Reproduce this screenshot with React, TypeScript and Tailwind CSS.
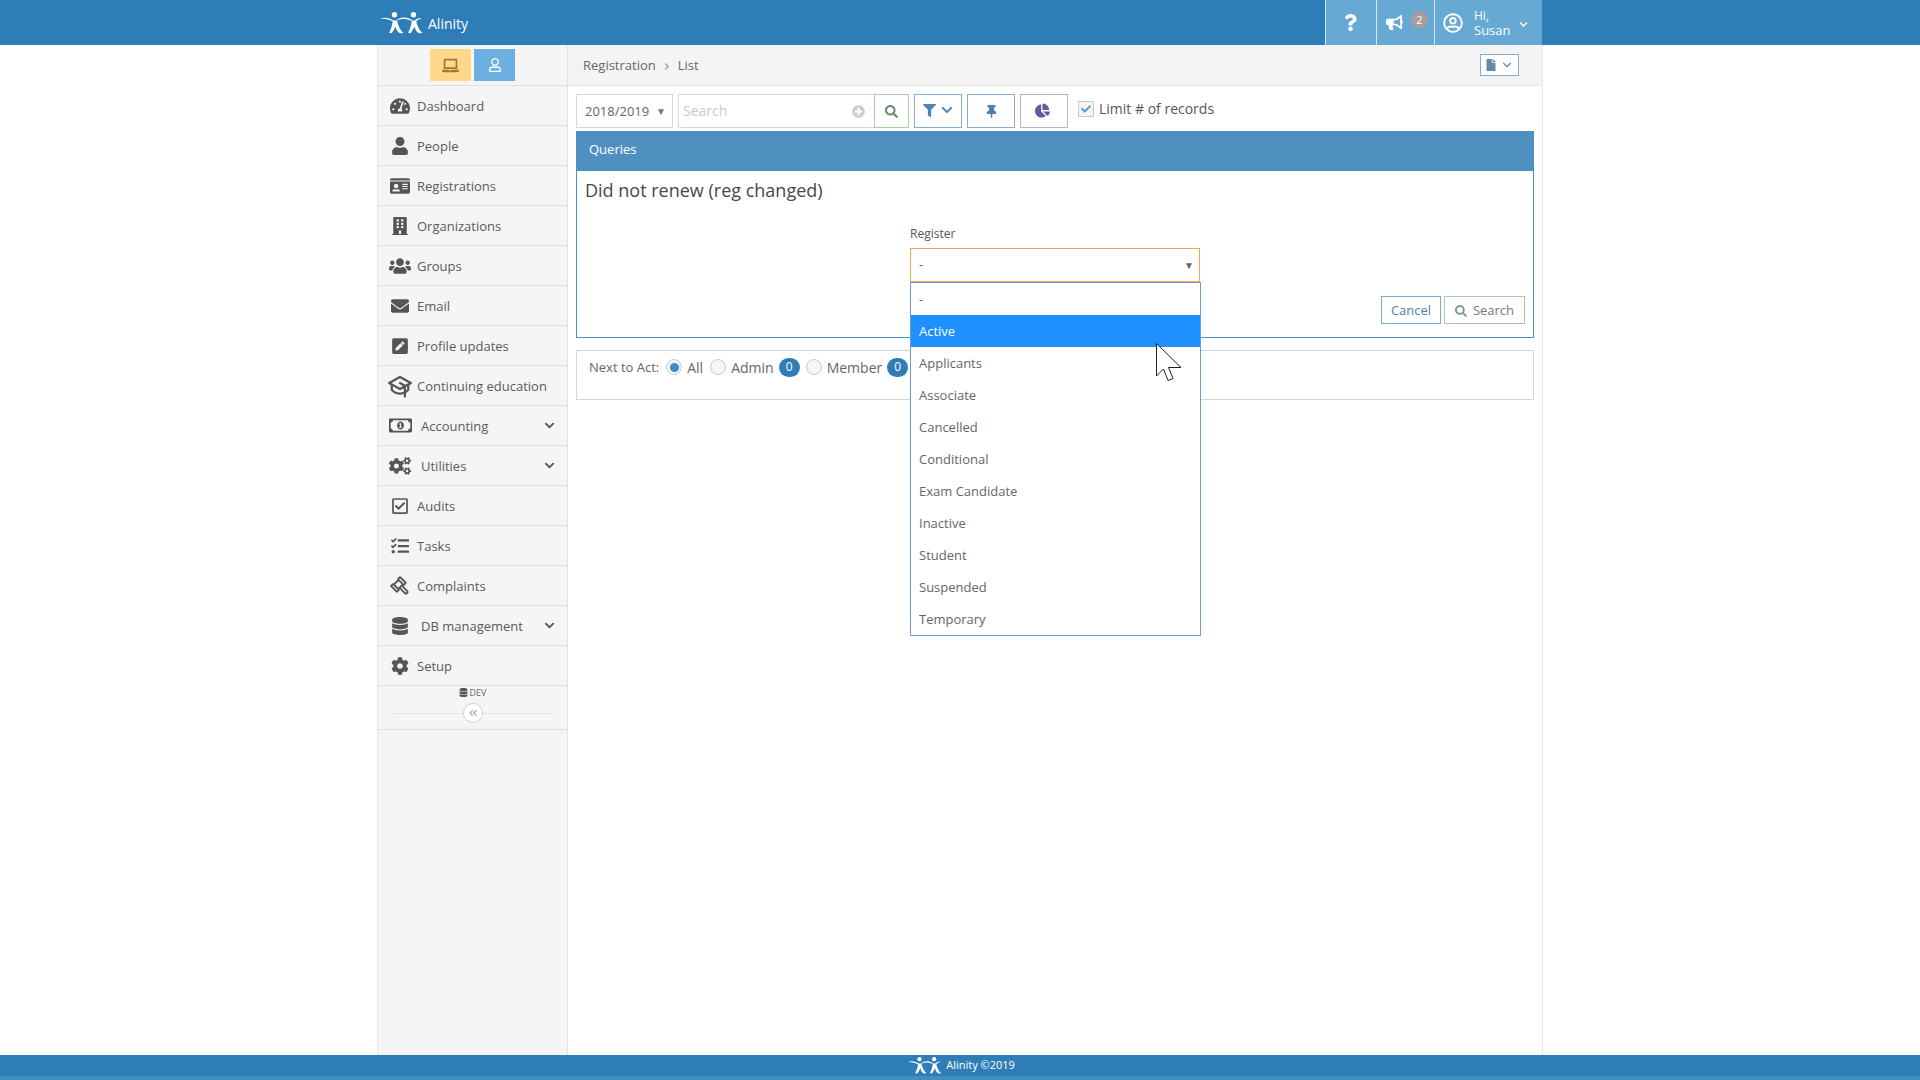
import type { ReactNode } from "react";
import {
  FaBuilding,
  FaBullhorn,
  FaChartPie,
  FaChevronDown,
  FaCog,
  FaCogs,
  FaDatabase,
  FaEnvelope,
  FaFile,
  FaFilter,
  FaIdCard,
  FaLaptop,
  FaPenSquare,
  FaPlusCircle,
  FaQuestion,
  FaRegCheckSquare,
  FaRegMoneyBillAlt,
  FaRegUser,
  FaRegUserCircle,
  FaSearch,
  FaTachometerAlt,
  FaTasks,
  FaThumbtack,
  FaUser,
  FaUsers,
  FaAngleDoubleLeft,
  FaAngleRight,
  FaCheck,
} from "react-icons/fa";
import { LuChevronDown } from "react-icons/lu";
import { PiGavelBold, PiGraduationCapBold } from "react-icons/pi";

type MenuItem = { label: string; icon: ReactNode; more?: boolean };

const menu: MenuItem[] = [
  { label: "Dashboard", icon: <FaTachometerAlt className="text-[20px]" /> },
  { label: "People", icon: <FaUser className="text-[18px]" /> },
  { label: "Registrations", icon: <FaIdCard className="text-[20px]" /> },
  { label: "Organizations", icon: <FaBuilding className="text-[18px]" /> },
  { label: "Groups", icon: <FaUsers className="text-[22px]" /> },
  { label: "Email", icon: <FaEnvelope className="text-[18px]" /> },
  { label: "Profile updates", icon: <FaPenSquare className="text-[18px]" /> },
  { label: "Continuing education", icon: <PiGraduationCapBold className="text-[24px]" /> },
  { label: "Accounting", icon: <FaRegMoneyBillAlt className="text-[23px]" />, more: true },
  { label: "Utilities", icon: <FaCogs className="text-[22px]" />, more: true },
  { label: "Audits", icon: <FaRegCheckSquare className="text-[18px]" /> },
  { label: "Tasks", icon: <FaTasks className="text-[18px]" /> },
  { label: "Complaints", icon: <PiGavelBold className="text-[20px] -scale-x-100" /> },
  { label: "DB management", icon: <FaDatabase className="text-[18px]" />, more: true },
  { label: "Setup", icon: <FaCog className="text-[18px]" /> },
];

const registers = [
  "-",
  "Active",
  "Applicants",
  "Associate",
  "Cancelled",
  "Conditional",
  "Exam Candidate",
  "Inactive",
  "Student",
  "Suspended",
  "Temporary",
];

// two robed figures holding hands
function Logo({ className }: { className: string }) {
  const figure =
    "M12.8 8.4H17C18 13 20 18 23.4 21C20 22 17 20.5 15.6 14.4C14.6 16.4 13 19.4 11 21.6L9.2 20.6C11 17 12.4 13 12.8 8.4Z";
  return (
    <svg viewBox="0 0 42 22" className={className} fill="currentColor">
      <circle cx="14.5" cy="2.8" r="2.7" />
      <circle cx="33.5" cy="2.8" r="2.7" />
      <path d={figure} />
      <path d={figure} transform="translate(19 0)" />
      <path d="M0 6.4C5 4.8 10 5.8 14 9L13 9.6C9.5 7.4 5 6.5 0 6.4Z" />
      <path d="M16 8.6C20 4.8 26.5 4.4 32 8L31.4 9C26.5 6.4 21 6.4 16 8.6Z" />
      <path d="M35 8.6C36.6 6.4 39 5.8 42 6.4C39.5 6.8 37.6 7.6 36 9.6Z" />
    </svg>
  );
}

function Radio({ checked }: { checked?: boolean }) {
  return (
    <span className="flex h-[16px] w-[16px] items-center justify-center rounded-full border border-[#c4c8cc] bg-[#f6f6f6]">
      {checked && <span className="h-[9px] w-[9px] rounded-full bg-[#3f8bd0]" />}
    </span>
  );
}

function Count() {
  return (
    <span className="flex h-[19px] w-[21px] items-center justify-center rounded-full bg-[#2f7db6] text-[12px] text-white">
      0
    </span>
  );
}

function Sidebar() {
  return (
    <aside className="flex w-[190px] shrink-0 flex-col border-r border-[#e3e3e3] bg-[#f5f5f5] bg-[radial-gradient(#e6e6e6_0.6px,transparent_0.6px)] bg-[length:4px_4px] text-[13px] text-[#5a5a5a]">
      <div className="flex h-[41px] justify-center gap-[3px] border-b border-[#e0e0e0] pt-[4px]">
        <button className="flex h-[32px] w-[41px] items-center justify-center bg-[#ffd88a] text-[#a9713a]">
          <FaLaptop className="text-[17px]" />
        </button>
        <button className="flex h-[32px] w-[41px] items-center justify-center bg-[#6cb0e2] text-white">
          <FaRegUser className="text-[14px]" />
        </button>
      </div>
      {menu.map((item) => (
        <div
          key={item.label}
          className={`flex h-[40px] items-center border-b border-[#e0e0e0] pl-[10px] pr-[12px] ${item.more ? "gap-[9px]" : "gap-[5px]"}`}
        >
          <span className="flex w-[24px] justify-center text-[#555]">{item.icon}</span>
          <span className="flex-1 pt-[2px]">{item.label}</span>
          {item.more && <FaChevronDown className="text-[11px] text-[#555]" />}
        </div>
      ))}
      <div className="h-[44px] border-b border-[#e0e0e0]">
        <div className="flex h-[13px] items-center justify-center gap-[2px] text-[9px] text-[#666]">
          <FaDatabase className="text-[9px] text-[#555]" />
          DEV
        </div>
        <div className="mx-[15px] mt-[4px] flex items-center">
          <span className="h-px flex-1 bg-[#e2e2e2]" />
          <span className="flex h-[20px] w-[20px] items-center justify-center rounded-full border border-[#cfcfcf] bg-white text-[#b5b5b5]">
            <FaAngleDoubleLeft className="text-[10px]" />
          </span>
          <span className="h-px flex-1 bg-[#e2e2e2]" />
        </div>
      </div>
    </aside>
  );
}

function Toolbar() {
  return (
    <div className="flex h-[34px] items-stretch text-[13px] text-[#666]">
      <div className="flex w-[97px] items-center justify-between border border-[#d3dae1] pl-[8px] pr-[6px]">
        <span className="pt-[1px]">2018/2019</span>
        <span className="text-[10px] text-[#777]">▼</span>
      </div>
      <div className="ml-[5px] flex w-[196px] items-center justify-between border border-[#d3dae1] border-r-0 pl-[4px] pr-[9px]">
        <input
          placeholder="Search"
          className="w-[120px] -translate-y-px bg-transparent text-[14px] outline-none placeholder:text-[#c5cbd0]"
        />
        <FaPlusCircle className="text-[13px] text-[#c9ced6]" />
      </div>
      <button className="flex w-[35px] items-center justify-center border border-[#a8cf9f] text-[#6f8a76]">
        <FaSearch className="text-[13px]" />
      </button>
      <button className="ml-[5px] flex w-[48px] items-center justify-center gap-[5px] border border-[#86aed4] pb-[2px] text-[#4f84b5]">
        <FaFilter className="text-[13px]" />
        <FaChevronDown className="text-[12px]" />
      </button>
      <button className="ml-[5px] flex w-[48px] items-center justify-center border border-[#86aed4] text-[#4f7fab]">
        <FaThumbtack className="text-[13px]" />
      </button>
      <button className="ml-[5px] flex w-[48px] items-center justify-center border border-[#b8b8b8] pb-[2px] pr-[3px] text-[#5d5da0]">
        <FaChartPie className="text-[15px]" />
      </button>
      <label className="ml-[10px] flex items-start gap-[5px] pt-[7px]">
        <span className="flex h-[16px] w-[16px] items-center justify-center border border-[#c8ccd0] bg-[#f4f4f4] text-[#4f9bd5]">
          <FaCheck className="text-[10px]" />
        </span>
        <span className="text-[14px] leading-[16px] text-[#555]">Limit # of records</span>
      </label>
    </div>
  );
}

function QueryPanel() {
  return (
    <section className="mt-[3px] border border-[#4f90c1]">
      <div className="flex h-[39px] items-center bg-[#5090c1] pb-[3px] pl-[12px] text-[13px] text-white">Queries</div>
      <div className="h-[166px] pl-[8px] pt-[7px]">
        <h2 className="text-[18px] leading-[24px] text-[#484848]">Did not renew (reg changed)</h2>
        <div className="ml-[325px] mt-[24px] w-[290px]">
          <div className="h-[16px] text-[12px] leading-[16px] text-[#555]">Register</div>
          <div className="relative mt-[6px]">
            <div className="flex h-[34px] items-center justify-between border border-[#f0a650] pl-[8px] pr-[5px] text-[13px] text-[#666]">
              <span>-</span>
              <span className="text-[10px] text-[#666]">▼</span>
            </div>
            <ul className="absolute left-0 top-full z-10 w-[291px] border border-[#7196d9] bg-white text-[13px] text-[#666]">
              {registers.map((name) => (
                <li
                  key={name}
                  className={`flex h-[32px] items-center pl-[8px] pt-[1px] ${name === "Active" ? "bg-[#1e90ff] text-white" : ""}`}
                >
                  {name}
                </li>
              ))}
            </ul>
            <svg
              viewBox="0 0 26 38"
              className="absolute left-[246px] top-[95px] z-20 h-[38px] w-[26px]"
              fill="#fff"
              stroke="#1c1f33"
              strokeWidth="1"
            >
              <path d="M0.5 0.5V33L7.5 26L12 37.5L17 35.5L12.5 24.5H25Z" />
            </svg>
          </div>
        </div>
      </div>
      <div className="-mt-[41px] flex justify-end gap-[3px] pb-[13px] pr-[8px] text-[13px]">
        <button className="flex h-[28px] w-[60px] items-center justify-center border border-[#7fabd0] pt-[1px] text-[#4f7fa8]">Cancel</button>
        <button className="flex h-[28px] w-[81px] items-center justify-center gap-[6px] border border-[#a8cba3] pt-[1px] text-[#777]">
          <FaSearch className="text-[12px] text-[#7f9c86]" />
          Search
        </button>
      </div>
    </section>
  );
}

export default function App() {
  return (
    <div className="flex h-screen flex-col bg-white font-['Open_Sans',sans-serif]">
      <header className="h-[45px] shrink-0 bg-[#2f7db6] text-white">
        <div className="mx-auto flex h-full w-[1166px] items-center pr-[1px]">
          <div className="flex flex-1 items-center gap-[6px] pl-[3px]">
            <Logo className="h-[22px] w-[42px]" />
            <span className="pt-[1px] text-[14px]">Alinity</span>
          </div>
          <div className="flex h-full items-stretch bg-[#66a9d3]">
            <div className="flex w-[51px] items-center justify-center border-l border-[#d3e5f1] pr-[2px]">
              <FaQuestion className="text-[17px]" />
            </div>
            <div className="flex w-[58px] items-center gap-[8px] border-l border-[#d3e5f1] pl-[9px]">
              <FaBullhorn className="text-[17px]" />
              <span className="-mt-[5px] flex h-[18px] w-[17px] items-center justify-center rounded-full bg-[#a39f9f] text-[11px] text-white">2</span>
            </div>
            <div className="flex w-[108px] items-center border-l border-[#d3e5f1] pl-[8px]">
              <FaRegUserCircle className="text-[20px]" />
              <span className="ml-[11px] flex w-[44px] flex-col text-[13px] leading-[15px]">
                <span className="text-[12px]">Hi,</span>
                <span>Susan</span>
              </span>
              <FaChevronDown className="ml-[1px] mt-[3px] text-[9px]" />
            </div>
          </div>
        </div>
      </header>

      <div className="mx-auto flex min-h-0 w-[1166px] flex-1 border-x border-[#e8e8e8]">
        <Sidebar />
        <main className="flex-1">
          <div className="flex h-[41px] items-center justify-between border-b border-[#e4e4e4] bg-[#f4f4f4] pl-[15px] pr-[23px] text-[13px] text-[#666]">
            <div className="flex items-center gap-[7px] pt-[2px]">
              <span>Registration</span>
              <FaAngleRight className="w-[8px] text-[11px] text-[#aab]" />
              <span>List</span>
            </div>
            <button className="flex h-[22px] w-[39px] items-center justify-center gap-[3px] border border-[#86aed4] bg-white text-[#6389ab]">
              <FaFile className="text-[12px]" />
              <LuChevronDown className="text-[14px]" />
            </button>
          </div>
          <div className="px-[8px] pt-[8px]">
            <Toolbar />
            <QueryPanel />
            <div className="mt-[12px] flex h-[50px] items-start gap-[5px] border border-[#ced8e2] pl-[12px] pt-[5px] text-[14px] text-[#666]">
              <span className="mr-[2px] text-[13px] leading-[22px]">Next to Act:</span>
              <span className="flex h-[22px] items-center gap-[5px]">
                <Radio checked />
                All
              </span>
              <span className="ml-[2px] flex h-[22px] items-center gap-[5px]">
                <Radio />
                Admin
                <Count />
              </span>
              <span className="ml-[1px] flex h-[22px] items-center gap-[5px]">
                <Radio />
                Member
                <Count />
              </span>
            </div>
          </div>
        </main>
      </div>

      <footer className="flex h-[25px] shrink-0 items-center justify-center gap-[4px] border-b-4 border-[#3f8fbc] bg-[#2f7db6] pl-[2px] text-[11px] text-white">
        <Logo className="h-[17px] w-[35px]" />
        Alinity ©2019
      </footer>
    </div>
  );
}
